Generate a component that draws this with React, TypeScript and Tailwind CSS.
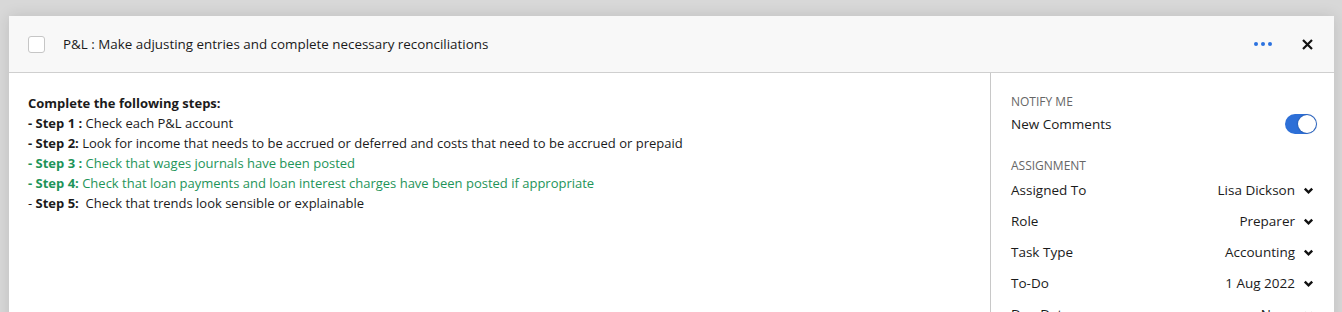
import React from "react";

const rows = [
  { label: "Assigned To", value: "Lisa Dickson" },
  { label: "Role", value: "Preparer" },
  { label: "Task Type", value: "Accounting" },
  { label: "To-Do", value: "1 Aug 2022" },
  { label: "Due Date", value: "None" },
];

const Chevron = () => (
  <svg width="11" height="8" viewBox="0 0 11 8" className="ml-[8px]">
    <path d="M1.8 1.6 L5.5 5.3 L9.2 1.6" fill="none" stroke="#111" strokeWidth="2.4" />
  </svg>
);

export default function App() {
  return (
    <div
      className="h-[312px] w-[1342px] overflow-hidden bg-[#d8d8d8] pl-[9px] pr-[8px] pt-[16px] text-[13px] text-[#1b1b1b]"
      style={{ fontFamily: '"Open Sans", sans-serif' }}
    >
      <div className="flex h-[400px] flex-col bg-white shadow-[0_0_14px_rgba(0,0,0,0.12)]">
        {/* header */}
        <div className="flex h-[57px] shrink-0 items-center border-b border-[#cfcfcf] bg-[#f8f8f8] pl-[19px] pr-[21px]">
          <span className="h-[17px] w-[17px] rounded-[3px] border border-[#c6c6c6] bg-white" />
          <span className="ml-[18px] text-[13.4px] text-[#1a1a1a]">
            P&amp;L : Make adjusting entries and complete necessary reconciliations
          </span>
          <div className="ml-auto flex items-center">
            <div className="flex gap-[3px]">
              <span className="h-[4px] w-[4px] rounded-full bg-[#2b72e0]" />
              <span className="h-[4px] w-[4px] rounded-full bg-[#2b72e0]" />
              <span className="h-[4px] w-[4px] rounded-full bg-[#2b72e0]" />
            </div>
            <svg width="11" height="11" viewBox="0 0 11 11" className="ml-[30px]">
              <path d="M1 1 L10 10 M10 1 L1 10" stroke="#111" strokeWidth="2.2" />
            </svg>
          </div>
        </div>

        {/* body */}
        <div className="flex flex-1">
          <div className="flex-1 px-[19px] pt-[20px] leading-[20px]">
            <div className="font-bold">Complete the following steps:</div>
            <div>
              <b>- Step 1 :</b> Check each P&amp;L account
            </div>
            <div>
              <b>- Step 2:</b> Look for income that needs to be accrued or deferred and costs that need to be accrued or prepaid
            </div>
            <div className="text-[#1e9459]">
              <b>- Step 3 :</b> Check that wages journals have been posted
            </div>
            <div className="text-[#1e9459]">
              <b>- Step 4:</b> Check that loan payments and loan interest charges have been posted if appropriate
            </div>
            <div>
              - <b>Step 5:</b>&nbsp; Check that trends look sensible or explainable
            </div>
          </div>

          <div className="w-[344px] shrink-0 border-l border-[#c8c8c8] pl-[20px] pr-[17px] pt-[21px] text-[13.5px]">
            <div className="text-[12px] uppercase leading-[16px] text-[#666]">Notify me</div>
            <div className="flex h-[28px] items-center justify-between">
              <span>New Comments</span>
              <span className="flex h-[20px] w-[32px] items-center justify-end rounded-full bg-[#2d6fd7] p-[1px]">
                <span className="h-[18px] w-[18px] rounded-full bg-white shadow-[0_0_2px_rgba(0,0,0,0.4)]" />
              </span>
            </div>
            <div className="mt-[20px] text-[12px] uppercase leading-[16px] text-[#666]">Assignment</div>
            <div className="mt-[1px]">
              {rows.map((r) => (
                <div key={r.label} className="flex h-[31px] items-center justify-between">
                  <span>{r.label}</span>
                  <span className="flex items-center pr-[3px]">
                    {r.value}
                    <Chevron />
                  </span>
                </div>
              ))}
            </div>
          </div>
        </div>
      </div>
    </div>
  );
}
